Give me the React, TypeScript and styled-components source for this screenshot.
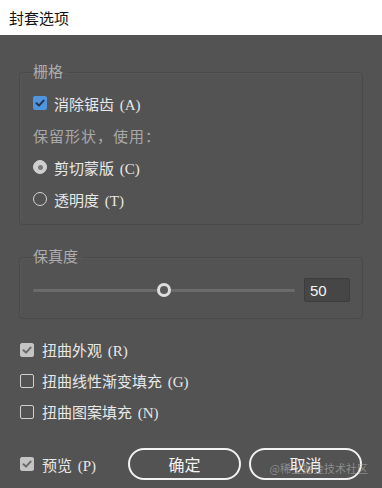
import { useState } from 'react';
import styled, { createGlobalStyle } from 'styled-components';

const GlobalStyle = createGlobalStyle`
  html, body {
    margin: 0;
    padding: 0;
    background: #535353;
  }
  * {
    box-sizing: border-box;
  }
`;

const textFont = `"Liberation Serif", "Noto Sans CJK SC", serif`;

const App: React.FC = () => {
  const [antialias, setAntialias] = useState(true);
  const [shape, setShape] = useState<'clip' | 'opacity'>('clip');
  const [fidelity, setFidelity] = useState(50);
  const [distortAppearance, setDistortAppearance] = useState(true);
  const [distortGradient, setDistortGradient] = useState(false);
  const [distortPattern, setDistortPattern] = useState(false);
  const [preview, setPreview] = useState(true);

  return (
    <>
      <GlobalStyle />
      <Window>
        <TitleBar>封套选项</TitleBar>
        <Body>
          <Panel $pt={5} $pb={9}>
            <Legend>栅格</Legend>
            <Row onClick={() => setAntialias(!antialias)}>
              <CheckBox $checked={antialias} $accent>
                {antialias && <CheckMark color='#23364a' />}
              </CheckBox>
              <Label>消除锯齿 (A)</Label>
            </Row>
            <Row>
              <Hint>保留形状，使用：</Hint>
            </Row>
            <Row onClick={() => setShape('clip')}>
              <Radio $checked={shape === 'clip'} />
              <Label>剪切蒙版 (C)</Label>
            </Row>
            <Row onClick={() => setShape('opacity')}>
              <Radio $checked={shape === 'opacity'} />
              <Label>透明度 (T)</Label>
            </Row>
          </Panel>

          <Panel $pt={7} $pb={12} $mt={22}>
            <Legend>保真度</Legend>
            <SliderRow>
              <Track>
                <Thumb style={{ left: `${fidelity}%` }} />
              </Track>
              <ValueBox
                value={fidelity}
                onChange={(e) => setFidelity(Math.max(0, Math.min(100, Number(e.target.value) || 0)))}
              />
            </SliderRow>
          </Panel>

          <Options>
            <OptionRow onClick={() => setDistortAppearance(!distortAppearance)}>
              <CheckBox $checked={distortAppearance}>
                {distortAppearance && <CheckMark color='#6a6a6a' />}
              </CheckBox>
              <Label>扭曲外观 (R)</Label>
            </OptionRow>
            <OptionRow onClick={() => setDistortGradient(!distortGradient)}>
              <CheckBox $checked={distortGradient}>
                {distortGradient && <CheckMark color='#6a6a6a' />}
              </CheckBox>
              <Label>扭曲线性渐变填充 (G)</Label>
            </OptionRow>
            <OptionRow onClick={() => setDistortPattern(!distortPattern)}>
              <CheckBox $checked={distortPattern}>
                {distortPattern && <CheckMark color='#6a6a6a' />}
              </CheckBox>
              <Label>扭曲图案填充 (N)</Label>
            </OptionRow>
          </Options>

          <Footer>
            <OptionRow onClick={() => setPreview(!preview)}>
              <CheckBox $checked={preview}>
                {preview && <CheckMark color='#6a6a6a' />}
              </CheckBox>
              <Label>预览 (P)</Label>
            </OptionRow>
            <Buttons>
              <Button type='button'>确定</Button>
              <Button type='button'>取消</Button>
            </Buttons>
          </Footer>
          <Watermark>@稀土掘金技术社区</Watermark>
        </Body>
      </Window>
    </>
  );
};

const CheckMark: React.FC<{ color: string }> = ({ color }) => (
  <svg width='10' height='10' viewBox='0 0 10 10'>
    <path d='M1.5 5.2 L4 7.6 L8.6 2.6' fill='none' stroke={color} strokeWidth='2' strokeLinecap='round' strokeLinejoin='round' />
  </svg>
);

export default App;

const Window = styled.div`
  width: 382px;
  height: 488px;
  display: flex;
  flex-direction: column;
  overflow: hidden;
`;

const TitleBar = styled.div`
  height: 35px;
  flex-shrink: 0;
  background: #ffffff;
  color: #111;
  font-family: "Noto Sans CJK SC", sans-serif;
  font-size: 15px;
  line-height: 35px;
  padding-left: 9px;
`;

const Body = styled.div`
  position: relative;
  flex: 1;
  background: #535353;
  padding: 27px 19px 0 19px;
  display: flex;
  flex-direction: column;
`;

const Panel = styled.fieldset<{ $pt: number; $pb: number; $mt?: number }>`
  margin: ${(p) => p.$mt || 0}px 0 0 0;
  padding: ${(p) => p.$pt}px 12px ${(p) => p.$pb}px 13px;
  border: 1px solid #494949;
  border-radius: 4px;
  box-shadow: inset 1px 1px 0 rgba(255, 255, 255, 0.03);
  min-inline-size: 0;
  display: flex;
  flex-direction: column;
`;

const Legend = styled.legend`
  padding: 0 4px 0 0;
  font-family: ${textFont};
  font-size: 15px;
  line-height: 20px;
  color: #adadad;
`;

const Row = styled.div`
  height: 32px;
  display: flex;
  align-items: center;
  gap: 7px;
  cursor: default;
`;

const Label = styled.span`
  font-family: ${textFont};
  font-size: 15px;
  color: #e8e8e8;
  white-space: nowrap;
  word-spacing: 2px;
`;

const Hint = styled.span`
  font-family: ${textFont};
  font-size: 15px;
  color: #a8a8a8;
  white-space: nowrap;
  letter-spacing: 1px;
`;

const CheckBox = styled.span<{ $checked: boolean; $accent?: boolean }>`
  width: 14px;
  height: 14px;
  flex-shrink: 0;
  border-radius: 2px;
  display: flex;
  align-items: center;
  justify-content: center;
  background: ${(p) => (p.$checked ? (p.$accent ? '#4f95e0' : '#c4c4c4') : 'transparent')};
  border: 1px solid ${(p) => (p.$checked ? (p.$accent ? '#4f95e0' : '#c4c4c4') : '#cfcfcf')};
`;

const Radio = styled.span<{ $checked: boolean }>`
  width: 14px;
  height: 14px;
  flex-shrink: 0;
  border-radius: 50%;
  border: 1.5px solid #d2d2d2;
  background: ${(p) => (p.$checked ? '#cfcfcf' : 'transparent')};
  display: flex;
  align-items: center;
  justify-content: center;
  &::after {
    content: '';
    width: 5px;
    height: 5px;
    border-radius: 50%;
    background: ${(p) => (p.$checked ? '#7a7a7a' : 'transparent')};
  }
`;

const SliderRow = styled.div`
  height: 32px;
  display: flex;
  align-items: center;
  gap: 9px;
`;

const Track = styled.div`
  position: relative;
  flex: 1;
  height: 3px;
  border-radius: 2px;
  background: #6b6b6b;
`;

const Thumb = styled.span`
  position: absolute;
  top: 50%;
  width: 14px;
  height: 14px;
  border-radius: 50%;
  border: 3px solid #dedede;
  background: #595959;
  transform: translate(-50%, -50%);
`;

const ValueBox = styled.input`
  width: 46px;
  height: 24px;
  padding: 0 0 0 5px;
  background: #464646;
  border: 1px solid #3d3d3d;
  border-radius: 2px;
  color: #f4f4f4;
  font-family: "Liberation Sans", Arial, sans-serif;
  font-size: 15px;
  outline: none;
`;

const Options = styled.div`
  margin-top: 15px;
  padding-left: 1px;
  display: flex;
  flex-direction: column;
`;

const OptionRow = styled.div`
  height: 31px;
  display: flex;
  align-items: center;
  gap: 8px;
  cursor: default;
`;

const Footer = styled.div`
  margin-top: 21px;
  padding-left: 1px;
  display: flex;
  align-items: center;
  justify-content: space-between;
`;

const Buttons = styled.div`
  display: flex;
  gap: 8px;
  margin-right: 1px;
`;

const Button = styled.button`
  width: 113px;
  height: 32px;
  border: 2px solid #f2f2f2;
  border-radius: 16px;
  background: transparent;
  color: #f2f2f2;
  font-family: ${textFont};
  font-size: 16px;
  cursor: pointer;
`;

const Watermark = styled.span`
  position: absolute;
  right: 14px;
  bottom: 12px;
  font-family: "Noto Sans CJK SC", sans-serif;
  font-size: 11px;
  color: rgba(190, 190, 190, 0.55);
  pointer-events: none;
`;
